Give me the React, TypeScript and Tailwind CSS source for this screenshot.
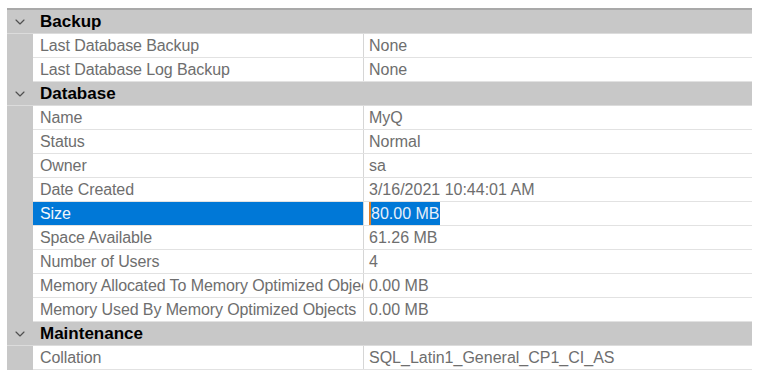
import { ChevronDown } from "lucide-react";

type Row = { name: string; value: string; selected?: boolean };
type Section = { title: string; rows: Row[] };

const sections: Section[] = [
  {
    title: "Backup",
    rows: [
      { name: "Last Database Backup", value: "None" },
      { name: "Last Database Log Backup", value: "None" },
    ],
  },
  {
    title: "Database",
    rows: [
      { name: "Name", value: "MyQ" },
      { name: "Status", value: "Normal" },
      { name: "Owner", value: "sa" },
      { name: "Date Created", value: "3/16/2021 10:44:01 AM" },
      { name: "Size", value: "80.00 MB", selected: true },
      { name: "Space Available", value: "61.26 MB" },
      { name: "Number of Users", value: "4" },
      { name: "Memory Allocated To Memory Optimized Objects", value: "0.00 MB" },
      { name: "Memory Used By Memory Optimized Objects", value: "0.00 MB" },
    ],
  },
  {
    title: "Maintenance",
    rows: [{ name: "Collation", value: "SQL_Latin1_General_CP1_CI_AS" }],
  },
];

function Header({ title }: { title: string }) {
  return (
    <div className="flex h-[24px] items-center bg-[#c8c8c8] border-b border-[#dcdcdc]">
      <div className="flex w-[26px] shrink-0 justify-center pt-px">
        <ChevronDown size={16} strokeWidth={1.75} className="text-[#505050]" />
      </div>
      <div className="pl-[7px] text-[17px] font-bold text-black leading-none">{title}</div>
    </div>
  );
}

function PropRow({ row }: { row: Row }) {
  return (
    <div className="flex h-[24px] bg-[#c8c8c8]">
      <div className="w-[26px] shrink-0" />
      <div className="flex flex-1 border-b border-[#e2e2e2] bg-white">
        <div
          className={
            row.selected
              ? "flex w-[330px] shrink-0 items-center overflow-hidden whitespace-nowrap bg-[#0078d7] pl-[7px] text-[16px] tracking-[-0.1px] text-[#f2f6fb]"
              : "flex w-[330px] shrink-0 items-center overflow-hidden whitespace-nowrap pl-[7px] text-[16px] tracking-[-0.1px] text-[#6e6e6e]"
          }
        >
          {row.name}
        </div>
        <div className="w-px shrink-0 bg-[#d6d6d6]" />
        <div className="flex flex-1 items-center overflow-hidden whitespace-nowrap pl-[5px] text-[16px] text-[#6e6e6e]">
          {row.selected ? (
            <span className="border-l-2 border-[#e0802a] bg-[#0078d7] pr-px text-[#e8f0fa]">{row.value}</span>
          ) : (
            row.value
          )}
        </div>
      </div>
    </div>
  );
}

export default function App() {
  return (
    <div className="h-[378px] w-[760px] bg-white pt-[8px] pl-[7px]" style={{ fontFamily: '"Liberation Sans", Arial, sans-serif' }}>
      <div className="w-[745px] border-t-2 border-[#a9a9a9]">
        {sections.map((s) => (
          <div key={s.title}>
            <Header title={s.title} />
            {s.rows.map((r) => (
              <PropRow key={r.name} row={r} />
            ))}
          </div>
        ))}
      </div>
    </div>
  );
}
